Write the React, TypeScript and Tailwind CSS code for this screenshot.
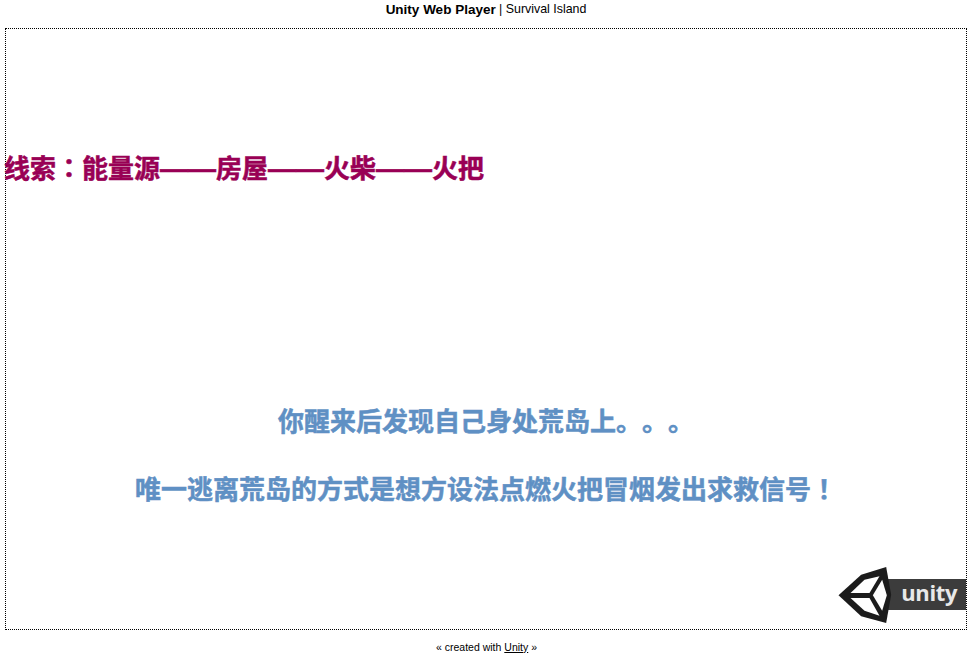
function Dash() {
  return <span className="font-['Liberation_Sans',sans-serif] text-[28px] font-bold">——</span>;
}

function Mark({ children }: { children: string }) {
  return <span className="font-['Noto_Sans_CJK_TC',sans-serif]">{children}</span>;
}

export default function App() {
  return (
    <div className="h-[656px] w-[976px] overflow-hidden bg-white font-['Liberation_Sans',Arial,sans-serif] text-black">
      <div className="flex h-[28px] items-start justify-center pt-[2px] pr-[4px] leading-[15px]">
        <b className="text-[13.5px]">Unity Web Player</b>
        <span className="whitespace-pre text-[12.4px]"> | Survival Island</span>
      </div>
      <div className="relative ml-[5px] h-[602px] w-[962px] border border-dotted border-black font-['Noto_Sans_CJK_SC','Liberation_Sans',sans-serif] text-[26px] font-bold leading-[36px] [-webkit-text-stroke:0.5px_currentColor] [text-spacing-trim:space-all]">
        <p className="mt-[120px] -ml-[2px] whitespace-nowrap text-[#990055]">
          线索<Mark>：</Mark>能量源<Dash />房屋<Dash />火柴<Dash />火把
        </p>
        <p className="mt-[215px] text-center text-[#5f90c4]">你醒来后发现自己身处荒岛上。。。</p>
        <p className="mt-[32px] text-center text-[#5f90c4]">
          唯一逃离荒岛的方式是想方设法点燃火把冒烟发出求救信号<Mark>！</Mark>
        </p>
        <div className="absolute bottom-[19px] right-0 flex h-[31px] w-[80px] items-center justify-end bg-[#3c3c3c] pr-[9px] pb-[6px] font-['Open_Sans',sans-serif] text-[22px] font-bold leading-none tracking-[-0.4px] text-[#e8e8e8] [-webkit-text-stroke:0px]">
          unity
        </div>
        <svg className="absolute bottom-[5px] right-[73px]" width="57" height="58" viewBox="20 18 170 174">
          <polygon points="27,106 95,44 170,21 185,104 170,189 95,169" fill="#1c1c1c" />
          <polygon points="63,99 105,59 150,49 120,99" fill="#fff" />
          <polygon points="63,114 120,114 150,167 105,152" fill="#fff" />
          <polygon points="130,106 158,59 172,106 158,152" fill="#fff" />
        </svg>
      </div>
      <div className="flex h-[26px] items-center justify-center pt-[8px] pr-[3px] text-[10.5px] leading-none">
        <span>« created with <a className="underline">Unity</a> »</span>
      </div>
    </div>
  );
}
